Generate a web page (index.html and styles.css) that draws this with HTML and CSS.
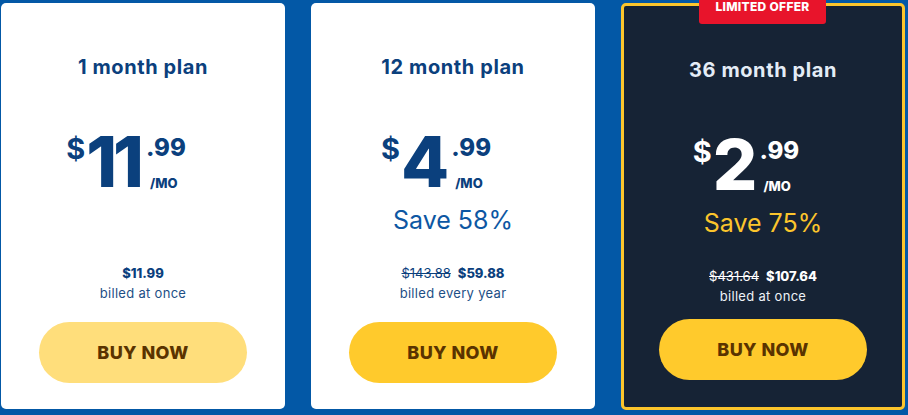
FILE: index.html
```html
<!DOCTYPE html>
<html>
<head>
<meta charset="utf-8">
<link rel="stylesheet" href="styles.css">
</head>
<body>
<div class="plans">
  <div class="card">
    <div class="title">1 month plan</div>
    <div class="price">
      <span class="cur">$</span>
      <span class="big">11</span>
      <span class="side"><span class="cents">.99</span><span class="mo">/MO</span></span>
    </div>
    <div class="bottom">
      <div class="total"><b>$11.99</b></div>
      <div class="billed">billed at once</div>
      <button class="buy buy-soft">BUY NOW</button>
    </div>
  </div>
  <div class="card">
    <div class="title">12 month plan</div>
    <div class="price">
      <span class="cur">$</span>
      <span class="big">4</span>
      <span class="side"><span class="cents">.99</span><span class="mo">/MO</span></span>
    </div>
    <div class="save">Save 58%</div>
    <div class="bottom">
      <div class="total"><s>$143.88</s><b>$59.88</b></div>
      <div class="billed">billed every year</div>
      <button class="buy">BUY NOW</button>
    </div>
  </div>
  <div class="card card-dark">
    <div class="badge">LIMITED OFFER</div>
    <div class="title">36 month plan</div>
    <div class="price">
      <span class="cur">$</span>
      <span class="big">2</span>
      <span class="side"><span class="cents">.99</span><span class="mo">/MO</span></span>
    </div>
    <div class="save">Save 75%</div>
    <div class="bottom">
      <div class="total"><s>$431.64</s><b>$107.64</b></div>
      <div class="billed">billed at once</div>
      <button class="buy">BUY NOW</button>
    </div>
  </div>
</div>
</body>
</html>
```
FILE: styles.css
```css
* { box-sizing: border-box; }
html, body { margin: 0; height: 100%; }
body {
  background: #0358a6;
  font-family: Inter, "Open Sans", sans-serif;
  overflow: hidden;
}
.plans {
  display: flex;
  gap: 26px;
  padding: 3px 3px 0 1px;
}
.card {
  position: relative;
  width: 284px;
  height: 406px;
  background: #fff;
  border-radius: 5px;
  display: flex;
  flex-direction: column;
  align-items: center;
  padding: 52px 0 26px;
  color: #0b407d;
}
.card-dark {
  background: #162335;
  border: 3px solid #fcc52c;
  height: 407px;
  padding: 52px 0 27px;
  color: #fff;
}
.badge {
  position: absolute;
  top: -16px;
  left: 75px;
  width: 127px;
  height: 34px;
  background: #e8142b;
  color: #fff;
  font-size: 12px;
  font-weight: 800;
  letter-spacing: 0.3px;
  line-height: 34px;
  text-align: center;
  border-radius: 3px;
}
.title {
  font-size: 20px;
  line-height: 24px;
  font-weight: 700;
  letter-spacing: 0.6px;
}
.card-dark .title { color: #e4ecf6; }
.price {
  display: flex;
  align-items: flex-start;
  margin-top: 48px;
  margin-left: -34px;
}
.cur {
  font-size: 29px;
  font-weight: 700;
  line-height: 1;
  margin-top: 7px;
}
.big {
  font-size: 70px;
  font-weight: 800;
  line-height: 1;
  margin-left: 1px;
  letter-spacing: -4px;
}
.side {
  display: flex;
  flex-direction: column;
  margin-left: 6px;
  margin-top: 9px;
}
.cents {
  font-size: 24px;
  font-weight: 800;
  line-height: 1;
}
.mo {
  font-size: 13px;
  font-weight: 800;
  margin-top: 17px;
  margin-left: 4px;
  line-height: 1;
}
.save {
  margin-top: 8px;
  font-size: 25px;
  line-height: 30px;
  color: #0d57a3;
}
.card-dark .save { color: #fcc52c; }
.bottom {
  margin-top: auto;
  display: flex;
  flex-direction: column;
  align-items: center;
}
.total {
  font-size: 13px;
  line-height: 20px;
  display: flex;
  gap: 7px;
}
.total s { font-weight: 400; }
.total b { font-weight: 800; }
.billed {
  font-size: 13px;
  line-height: 20px;
  letter-spacing: 0.3px;
  color: #1d4f86;
}
.card-dark .billed { color: #eef2f7; }
.buy {
  margin-top: 19px;
  width: 208px;
  height: 61px;
  border: 0;
  border-radius: 31px;
  background: #ffca2c;
  color: #5a3300;
  font-family: inherit;
  font-size: 18px;
  font-weight: 800;
  letter-spacing: 0.4px;
  padding: 0;
}
.card-dark .buy { margin-top: 13px; }
.buy-soft { background: #ffde7b; }
```
